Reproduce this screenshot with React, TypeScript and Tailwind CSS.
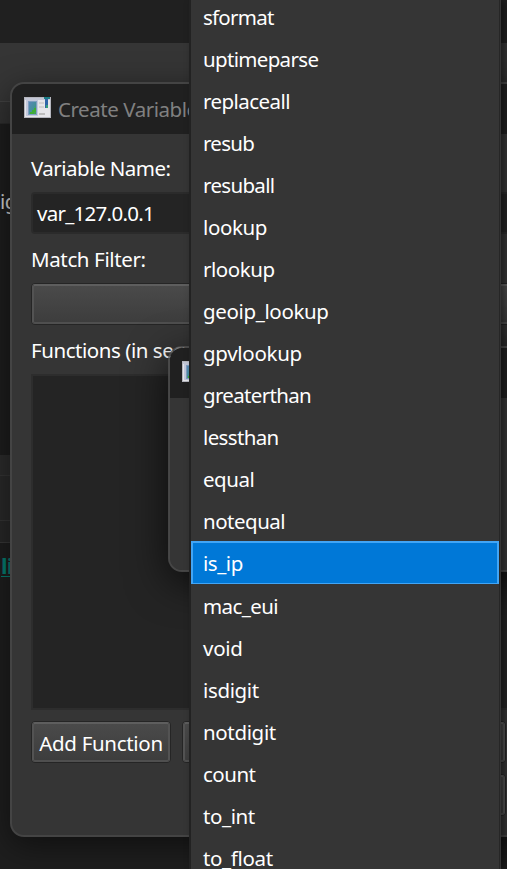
import React from "react";

const functions = [
  ["sformat", "tracking-[-0.75px]"],
  ["uptimeparse", "tracking-[-0.67px]"],
  ["replaceall", "tracking-[-0.55px]"],
  ["resub", "tracking-[-0.7px]"],
  ["resuball", "tracking-[-0.67px]"],
  ["lookup", "tracking-[-0.4px]"],
  ["rlookup", "tracking-[-0.45px]"],
  ["geoip_lookup", "tracking-[-0.36px]"],
  ["gpvlookup", "tracking-[-0.3px]"],
  ["greaterthan", "tracking-[-0.67px]"],
  ["lessthan", "tracking-[-0.65px]"],
  ["equal", "tracking-[-0.45px]"],
  ["notequal", "tracking-[-0.5px]"],
  ["is_ip", "tracking-[-0.45px]"],
  ["mac_eui", "tracking-[-0.6px]"],
  ["void", "tracking-[-0.25px]"],
  ["isdigit", "tracking-[-0.35px]"],
  ["notdigit", "tracking-[-0.35px]"],
  ["count", "tracking-[-0.5px]"],
  ["to_int", "tracking-[-0.4px]"],
  ["to_float", "tracking-[-0.35px]"],
];

function WindowIcon() {
  return (
    <svg width="27" height="21" viewBox="0 0 27 21" className="shrink-0">
      <defs>
        <linearGradient id="pane" x1="0" y1="0" x2="1" y2="1">
          <stop offset="0" stopColor="#5a86ba" />
          <stop offset="0.55" stopColor="#45909a" />
          <stop offset="1" stopColor="#43a83c" />
        </linearGradient>
      </defs>
      <rect width="27" height="21" fill="#b5b6be" />
      <rect x="1" y="1" width="25" height="19" fill="#e6e6ea" />
      <rect x="1" y="1" width="25" height="2" fill="#c3c7d6" />
      <rect x="2" y="3" width="12" height="16" fill="#c3c8dc" />
      <rect x="4" y="4" width="9" height="14" fill="#7f9fc0" />
      <rect x="5" y="5" width="7" height="12" fill="url(#pane)" />
      <path d="M6 17v-2h2v-2h2v-2h2v4h-2v2z" fill="#3fae35" />
      <path d="M15 6h5M15 10h5" stroke="#d2d2d2" strokeWidth="2" />
      <path d="M15 17h6" stroke="#bdbdbd" strokeWidth="2" />
      <rect x="21" y="1" width="3" height="10" fill="#2f66a8" />
      <rect x="20" y="0" width="6" height="2" fill="#1c7d85" />
      <rect x="22" y="8" width="2" height="3" fill="#39a07a" />
    </svg>
  );
}

function Button({ children, className = "" }: { children?: React.ReactNode; className?: string }) {
  return (
    <div className={`h-[42px] rounded-[4px] border border-[#252525] ${className}`}>
      <div className="flex h-full items-center justify-center rounded-[3px] border-2 border-t-[#5e5e5e] border-x-[#535353] border-b-[#4f4f4f] bg-linear-to-b from-[#4a4a4a] to-[#3d3d3d]">
        {children}
      </div>
    </div>
  );
}

export default function App() {
  return (
    <div className="relative h-[869px] w-[507px] overflow-hidden bg-[#1e1e1e] font-['Noto_Sans','Open_Sans',sans-serif] text-[20.5px] leading-[28px] tracking-[-0.45px] whitespace-nowrap text-white">
      <div className="flex h-full flex-col">
        <div className="h-[43px] bg-[#202020]" />
        <div className="h-[58px] bg-[#353535]" />
        <div className="h-[23px] border-y border-t-[#414141] border-b-[#292929] bg-[#313131]" />
        <div className="h-[331px] bg-[#1d1d1d] pt-[63px] text-[#d0d0d0]">ig</div>
        <div className="h-[20px] bg-[#2b2b2b]" />
        <div className="h-[46px] border-y border-[#343434] bg-[#292929]" />
        <div className="h-[22px] border-b border-[#373737] bg-[#272727]" />
        <div className="pt-[8px] pl-px text-[22px] font-bold tracking-[-0.8px] text-[#067c70] underline decoration-[1px] underline-offset-[2px]">li</div>
      </div>

      <div className="absolute top-[82px] left-[10px] h-[755px] w-[540px] overflow-hidden rounded-[14px] border-2 border-[#444444] bg-[#353535] shadow-[0_8px_32px_rgba(0,0,0,0.5)]">
        <div className="flex h-[50px] items-center gap-[7px] bg-[#202020] pl-[12px] text-[#808080]">
          <div className="-mt-[3px]"><WindowIcon /></div>
          <span>Create Variable</span>
        </div>
        <div className="flex flex-col pl-[19px]">
          <div className="mt-[20px] tracking-[-0.52px]">Variable Name:</div>
          <div className="mt-[10px] flex h-[42px] items-center rounded-[4px] border-2 border-[#2b2b2b] bg-[#242424] pl-[4px] tracking-[-0.72px]">var_127.0.0.1</div>
          <div className="mt-[11px] tracking-[-0.37px]">Match Filter:</div>
          <Button className="mt-[10px]" />
          <div className="mt-[11px]">Functions (in seq</div>
          <div className="mt-[10px] h-[336px] border-2 border-[#2d2d2d] bg-[#242424]" />
          <div className="mt-[11px] flex gap-[11px]">
            <Button className="w-[140px]"><span className="mt-[2px] tracking-[-0.3px]">Add Function</span></Button>
            <Button className="w-[324px]" />
          </div>
          <Button className="mt-[11px] ml-[305px] w-[170px]" />
        </div>
      </div>

      <div className="absolute top-[346px] left-[168px] h-[226px] w-[380px] overflow-hidden rounded-[14px] border-2 border-[#505050]/80 bg-[#353535] bg-clip-padding shadow-[0_10px_40px_rgba(0,0,0,0.7)]">
        <div className="flex h-[50px] bg-[#202020] pt-[13px] pl-[12px]"><WindowIcon /></div>
      </div>

      <div className="absolute top-0 left-[189px] h-[869px] w-[312px] overflow-hidden border-l-2 border-[#222222] bg-[#353535] shadow-[4px_0_8px_rgba(0,0,0,0.45)]">
        <div className="-mt-[5px] mr-[1px] flex flex-col border-r border-[#262626]">
          {functions.map(([name, tracking]) => (
            <div
              key={name}
              className={name === "is_ip"
                ? "flex h-[43px] items-center border-2 border-b-1 border-[#42a5f5] bg-[#0078d7] pl-[10px]"
                : "flex h-[42px] shrink-0 items-center pl-[12px]"}
            >
              <span className={name === "is_ip" ? tracking : `mt-[2px] ${tracking}`}>{name}</span>
            </div>
          ))}
        </div>
      </div>
    </div>
  );
}
